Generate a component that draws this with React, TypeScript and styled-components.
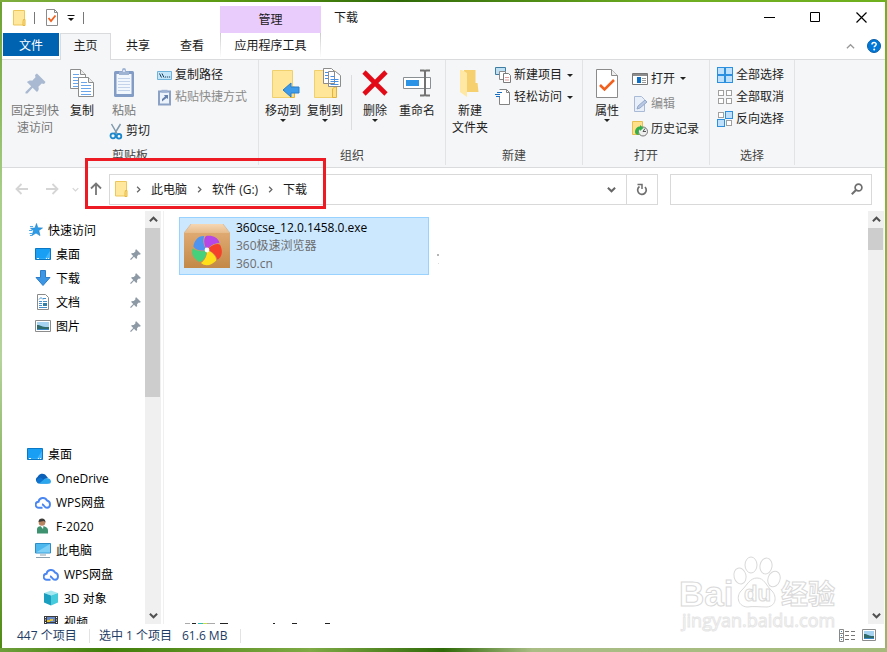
import React from "react";
import styled, { createGlobalStyle, css } from "styled-components";

const Global = createGlobalStyle`
  * { box-sizing: border-box; }
  body { margin: 0; }
  body, button, input {
    font-family: "Open Sans", "Noto Sans CJK SC", sans-serif;
    font-size: 12px;
    color: #1a1a1a;
  }
  button { background: none; border: 0; padding: 0; margin: 0; cursor: default; }
  svg { display: block; flex: none; }
`;

const Wallpaper = styled.div`
  height: 100vh;
  padding: 2px 2px 4px;
  background:
    linear-gradient(90deg, #6f9f3c, #3f7d08 12%, #7faa45 35%, #2f6a08 50%, #a9bd85 60%, #a4bb7c) bottom / 100% 4px no-repeat,
    linear-gradient(90deg, #7fae3f, #5b9a12 25%, #2f6a08 45%, #6fae22 75%, #6fb01e) top / 100% 2px no-repeat,
    linear-gradient(180deg, #6ca02f, #a9cf8a 30%, #b5d39c 55%, #4f8a12) left / 50% 100% no-repeat,
    linear-gradient(180deg, #6fb01e, #8db84a 50%, #9ab56c) right / 50% 100% no-repeat;
`;
const Window = styled.div`
  position: relative;
  display: flex;
  flex-direction: column;
  height: 100%;
  background: #fff;
  overflow: hidden;
`;

/* title bar */
const TitleBar = styled.header`
  display: flex;
  height: 31px;
  padding-right: 1px;
`;
const QuickTools = styled.div`
  display: flex;
  align-items: center;
  gap: 8px;
  width: 218px;
  padding-left: 10px;
`;
const Tick = styled.span`
  width: 1px;
  height: 12px;
  margin-right: 2px;
  background: #777;
`;
const ContextTitle = styled.div`
  width: 101px;
  margin-top: 4px;
  background: #e9cbfc;
  text-align: center;
  line-height: 27px;
`;
const WindowTitle = styled.h1`
  flex: 1;
  margin: 0;
  padding-left: 13px;
  font-size: 12px;
  font-weight: 400;
  line-height: 31px;
`;
const CaptionButton = styled.button`
  display: grid;
  place-items: center;
  width: 46px;
  height: 30px;
`;

/* ribbon tabs */
const TabRow = styled.nav`
  display: flex;
  height: 27px;
  padding: 0 4px 0 1px;
  border-bottom: 1px solid #dadbdc;
`;
const FileTab = styled.button`
  width: 56px;
  height: 23px;
  margin-right: 1px;
  background: #0063b1;
  color: #fff;
`;
const Tab = styled.button<{ $on?: boolean }>`
  width: ${(p) => (p.$on ? 51 : 54)}px;
  height: ${(p) => (p.$on ? 27 : 24)}px;
  ${(p) =>
    p.$on &&
    css`
      padding-bottom: 4px;
      border: 1px solid #dadbdc;
      border-bottom: 0;
      background: #f5f6f7;
    `}
`;
const ContextTab = styled.button`
  width: 101px;
  height: 24px;
  margin-left: 1px;
  border: solid;
  border-width: 0 1px;
  border-image: linear-gradient(#c9c9c9, #fff) 1;
`;
const TabEnd = styled.div`
  display: flex;
  align-items: center;
  gap: 12px;
  margin-left: auto;
`;

/* ribbon */
const Ribbon = styled.section`
  display: flex;
  height: 108px;
  background: #f5f6f7;
  border-bottom: 1px solid #dadbdc;
`;
const Group = styled.section<{ $w: number }>`
  display: flex;
  flex-direction: column;
  justify-content: space-between;
  width: ${(p) => p.$w}px;
  height: 105px;
  border-right: 1px solid #e2e3e4;
`;
const GroupBody = styled.div<{ $pad?: number }>`
  display: flex;
  align-items: flex-start;
  padding-left: ${(p) => p.$pad ?? 3}px;
`;
const GroupName = styled.h2`
  margin: 0;
  font-size: 12px;
  font-weight: 400;
  line-height: 18px;
  text-align: center;
  color: #444;
`;
const BigButton = styled.button<{ $w?: number; $dim?: boolean }>`
  display: flex;
  flex-direction: column;
  align-items: center;
  width: ${(p) => p.$w ?? 42}px;
  padding-top: 7px;
  line-height: 17px;
  white-space: nowrap;
  color: ${(p) => (p.$dim ? "#777" : "#222")};
`;
const BigIcon = styled.span`
  display: grid;
  place-items: center;
  height: 32px;
  margin-bottom: 3px;
`;
const Stack = styled.div<{ $row?: number; $ml?: number }>`
  display: flex;
  flex-direction: column;
  align-items: flex-start;
  margin-left: ${(p) => p.$ml ?? 4}px;
  padding-top: ${(p) => (p.$row ? 6 : 4)}px;
  > button { height: ${(p) => p.$row ?? 22}px; }
`;
const Clip = styled.div`
  display: flex;
  flex-direction: column;
  align-items: flex-start;
  gap: 3px;
  margin-left: 7px;
`;
const SmallButton = styled.button<{ $dim?: boolean }>`
  display: flex;
  align-items: center;
  gap: 3px;
  line-height: 18px;
  white-space: nowrap;
  color: ${(p) => (p.$dim ? "#8a8a8a" : "#222")};
`;
const InnerLine = styled.span`
  width: 1px;
  height: 55px;
  margin: 15px 2px 0 5px;
  background: #dcdddf;
`;
const Caret = styled.span<{ $side?: boolean }>`
  width: 6px;
  margin-left: ${(p) => (p.$side ? 2 : 0)}px;
  border: 3px solid transparent;
  border-top-color: #222;
  border-bottom: 0;
`;

/* address row */
const AddressRow = styled.div`
  position: relative;
  display: flex;
  align-items: center;
  height: 42px;
  padding: 0 13px 0 5px;
`;
const NavButtons = styled.div`
  display: flex;
  align-items: center;
  flex: none;
`;
const NavButton = styled.button<{ $w: number }>`
  display: grid;
  place-items: center;
  width: ${(p) => p.$w}px;
  height: 24px;
`;
const PathBox = styled.div`
  display: flex;
  align-items: center;
  flex: 1;
  height: 31px;
  padding-left: 4px;
  border: 1px solid #d9d9d9;
`;
const Crumb = styled.button`
  padding: 0 9px;
  white-space: nowrap;
`;
const PathIcon = styled.span`
  margin-right: 7px;
`;
const DropButton = styled.button`
  display: grid;
  place-items: center;
  width: 30px;
  height: 29px;
  margin-left: auto;
`;
const RefreshButton = styled(DropButton)`
  width: 31px;
  margin-left: 0;
  border-left: 1px solid #d9d9d9;
`;
const SearchBox = styled.label`
  display: flex;
  align-items: center;
  flex: 0 1 202px;
  height: 31px;
  margin-left: 12px;
  padding-right: 8px;
  border: 1px solid #d9d9d9;
`;
const SearchInput = styled.input`
  flex: 1;
  min-width: 0;
  height: 27px;
  padding: 0 6px;
  border: 0;
  outline: 0;
`;
const RedFrame = styled.div`
  position: absolute;
  top: -10px;
  left: 83px;
  width: 241px;
  height: 51px;
  border: 3px solid #ed1c24;
  pointer-events: none;
`;

/* panes */
const Panes = styled.div`
  display: flex;
  flex: 1;
  min-height: 0;
  padding: 1px 1px 0 0;
  overflow: hidden;
`;
const Sidebar = styled.aside`
  display: flex;
  width: 162px;
  padding-right: 2px;
  border-right: 1px solid #f0f0f0;
`;
const Tree = styled.ul`
  flex: 1;
  margin: 0;
  padding: 7px 0 0;
  overflow: hidden;
  list-style: none;
`;
const TreeItem = styled.li<{ $level: number; $gap?: boolean }>`
  display: flex;
  align-items: center;
  height: 24px;
  margin-top: ${(p) => (p.$gap ? 104 : 0)}px;
  padding: 0 4px 0 ${(p) => 25 + p.$level * 8}px;
  svg:last-child { margin-left: auto; }
`;
const TreeLink = styled.a`
  display: flex;
  align-items: center;
  gap: 5px;
  color: #000;
  text-decoration: none;
  white-space: nowrap;
`;
const Scroll = styled.div`
  display: flex;
  flex-direction: column;
  align-items: center;
  width: 16px;
  background: #f0f0f0;
`;
const ScrollButton = styled.button`
  display: grid;
  place-items: center;
  width: 16px;
  height: 17px;
`;
const Thumb = styled.div<{ $h: number }>`
  align-self: stretch;
  height: ${(p) => p.$h}px;
  margin: 0 1px 0 0;
  background: #cdcdcd;
`;
const Rest = styled.div`
  flex: 1;
`;
const Files = styled.main`
  display: flex;
  flex-direction: column;
  flex: 1;
  padding: 6px 0 0 15px;
`;
const FileRow = styled.div`
  display: flex;
  align-items: center;
`;
const FileTile = styled.button`
  display: flex;
  align-items: center;
  gap: 6px;
  width: 250px;
  height: 58px;
  padding-left: 4px;
  border: 1px solid #99d1ff;
  background: #cce8ff;
  text-align: left;
`;
const FileText = styled.span`
  display: flex;
  flex-direction: column;
  line-height: 18px;
  color: #6d6d6d;
`;
const FileName = styled.span`
  color: #000;
`;
const Speck = styled.svg`
  margin: 28px 0 0 8px;
`;
const NextRow = styled.svg`
  margin: auto 0 0 6px;
`;

/* status bar */
const Status = styled.footer`
  display: flex;
  align-items: center;
  height: 24px;
  padding: 0 9px 0 15px;
  color: #1e3c64;
  line-height: 18px;
`;
const StatusText = styled.span<{ $w: number }>`
  width: ${(p) => p.$w}px;
  white-space: nowrap;
`;
const StatusLine = styled.span`
  width: 1px;
  height: 14px;
  margin-right: 9px;
  background: #e3e3e3;
`;
const Views = styled.div`
  display: flex;
  align-items: center;
  gap: 6px;
  margin-left: auto;
  padding-bottom: 2px;
`;

/* watermark */
const Mark = styled.div`
  position: absolute;
  right: 46px;
  bottom: 14px;
  width: 160px;
  pointer-events: none;
`;
const MarkSvg = styled.svg`
  overflow: visible;
  font-family: "Liberation Sans", "Noto Sans CJK SC", sans-serif;
  font-weight: 700;
`;
const MarkUrl = styled.text`
  font-family: "Open Sans", sans-serif;
  font-weight: 400;
  font-size: 18px;
`;

/* icons */
const FolderSmall = () => (
  <svg width="14" height="16" viewBox="0 0 14 16">
    <path d="M1.500.5h11v14.500h-11z" fill="#ffe79c" stroke="#eec75a" />
    <path d="M11.500 9.500h1.500v6h-2v-4z" fill="#ffe08a" stroke="#e7b93c" />
  </svg>
);
const CheckPage = ({ big }: { big?: boolean }) => (
  <svg width={big ? 22 : 14} height={big ? 29 : 17} viewBox={big ? "0 0 22 29" : "0 0 14 17"}>
    {big ? (
      <>
        <path d="M.5.5h15l6 6v22H.5z" fill="#fff" stroke="#8b8b8b" />
        <path d="M15.500.5v6h6" fill="#eee" stroke="#8b8b8b" />
        <path d="M4 16l4.500 4.500L18 11" fill="none" stroke="#f2601d" strokeWidth="2.600" />
      </>
    ) : (
      <>
        <path d="M1.500 .5h8l3 3v13h-11z" fill="#fff" stroke="#8b8b8b" />
        <path d="M9.500 .5v3h3" fill="none" stroke="#8b8b8b" />
        <path d="M3.500 9l2.500 3L10.500 6.500" fill="none" stroke="#f2601d" strokeWidth="1.800" />
      </>
    )}
  </svg>
);
const QuickMenu = () => (
  <svg width="8" height="8" viewBox="0 0 8 8">
    <path d="M.5 1.500h7" stroke="#111" />
    <path d="M1 4h6L4 7z" fill="#111" />
  </svg>
);
const PinShape = ({ size, color }: { size: number; color: string }) => (
  <svg width={size} height={size} viewBox="0 0 22 22">
    <path d="M12.500.5L21.500 9.500 20 11.500l-2.500-.5L14 14.500c1 2.500 0 4.500-1.500 5.500L8 15.500l-5.500 6H.5V20l6-6L2 9.500C3.500 8 5.500 7.500 7.500 8L11 4.500 10.500 2z" fill={color} />
  </svg>
);
const PageLines = ({ x, y }: { x: number; y: number }) => (
  <g transform={`translate(${x} ${y})`}>
    <path d="M.5.5h10l5 5v14H.5z" fill="#fff" stroke="#8d8d8d" />
    <path d="M10.500.5v5h5" fill="#eee" stroke="#8d8d8d" />
    <path d="M3 5.500h6M3 8.500h10M3 11.500h10M3 14.500h10M3 17.500h10" stroke="#6aa5ea" />
  </g>
);
const CopyIcon = () => (
  <svg width="25" height="29" viewBox="0 0 25 29">
    <PageLines x={0} y={0} />
    <PageLines x={8} y={8} />
  </svg>
);
const PasteIcon = () => (
  <svg width="22" height="30" viewBox="0 0 22 30">
    <rect x="1" y="3" width="20" height="26" rx="1.500" fill="#829cc6" />
    <path d="M3.500 6h15v20h-15z" fill="#f2f6fd" />
    <path d="M5 10.500h12M5 13.500h12M5 16.500h12M5 19.500h12M5 22.500h12" stroke="#c5d3ea" />
    <path d="M6 7V3.500h3V2a2 2 0 0 1 4 0v1.500h3V7z" fill="#9fb3d3" />
    <circle cx="11" cy="3" r="1" fill="#eef" />
  </svg>
);
const CutIcon = () => (
  <svg width="14" height="17" viewBox="0 0 14 17">
    <path d="M2.500 1l5.700 10M11.500 1L5.500 11" stroke="#7f99ad" strokeWidth="1.500" fill="none" />
    <circle cx="4" cy="12.800" r="2.500" fill="none" stroke="#1b87cc" strokeWidth="1.800" />
    <circle cx="10" cy="13.300" r="2.300" fill="none" stroke="#1b87cc" strokeWidth="1.800" />
  </svg>
);
const PathCopyIcon = () => (
  <svg width="15" height="9" viewBox="0 0 15 9">
    <path d="M.5.5h14v8H.5z" fill="#c3e6f9" stroke="#6fb2da" />
    <path d="M2.500 2.500l2 4M5 2.500l2 4M8 6h1.200M10 6h1.200M12 6h1.200" stroke="#1d3f5e" />
  </svg>
);
const ShortcutIcon = () => (
  <svg width="15" height="17" viewBox="0 0 15 17">
    <path d="M2 2.500h11v13H2z" fill="#edf3fb" stroke="#8ba2c6" strokeWidth="2" />
    <path d="M4.500.8h6v3h-6z" fill="#9fb3d3" />
    <path d="M5 12.500V10l3-2.500-1-1.500h4v4L9.500 9z" fill="#6681ab" />
  </svg>
);
const BigFolder = () => (
  <>
    <path d="M.5 2.500h20v27H.5z" fill="#ffe699" stroke="#f0cf6d" />
    <path d="M20.500 19h2v10.500h-4V21z" fill="#ffdf85" stroke="#e2b43e" />
  </>
);
const MoveIcon = () => (
  <svg width="34" height="31" viewBox="-6 0 34 31">
    <BigFolder />
    <path d="M11 22l8-7v4h8v6h-8v4z" fill="#3d9be9" stroke="#2a7fcb" />
  </svg>
);
const CopyToIcon = () => (
  <svg width="34" height="31" viewBox="-6 0 34 31">
    <BigFolder />
    <path d="M9.500.5h8l3 3v12h-11zM14.500 3.500h7l5 4v11h-12z" fill="#fff" stroke="#8d8d8d" />
    <path d="M11 4.500h3M11 7.500h3M11 10.500h3M16.500 8.500h4M16.500 11.500h8M16.500 13.500h8M16.500 16.500h8" stroke="#4a90e2" />
  </svg>
);
const DeleteIcon = () => (
  <svg width="26" height="26" viewBox="0 0 26 26">
    <path d="M2 2l22 22M24 2L2 24" stroke="#e30a17" strokeWidth="4.600" />
  </svg>
);
const RenameIcon = () => (
  <svg width="28" height="28" viewBox="0 0 28 28">
    <path d="M.5 8.500h27v11H.5z" fill="#fff" stroke="#8a8f94" />
    <path d="M3 11h13v6H3z" fill="#2b93e6" />
    <path d="M22 2v24M17 1.500h4l1 1 1-1h4M17 26.500h4l1-1 1 1h4" fill="none" stroke="#737373" strokeWidth="2" />
  </svg>
);
const NewFolderIcon = () => (
  <svg width="20" height="28" viewBox="0 0 20 28">
    <path d="M4 1h11.500v13h2l1 9H4z" fill="#f6cf6f" />
    <path d="M0 1h2l5 3v24L0 23z" fill="#ffe8a3" />
  </svg>
);
const NewItemIcon = () => (
  <svg width="16" height="16" viewBox="0 0 16 16">
    <path d="M.5.5h10v7H.5z" fill="#bfe0f2" stroke="#3f7da3" />
    <path d="M4.500 4.500h6v8h-6z" fill="#fff" stroke="#8a8a8a" />
    <path d="M8.500 6.500h5l2 2v7h-7z" fill="#fff" stroke="#7b7b7b" />
    <path d="M10 10.500h4M10 13h4" stroke="#e49b9b" />
  </svg>
);
const EasyIcon = () => (
  <svg width="16" height="16" viewBox="0 0 16 16">
    <path d="M4.500 7v8.500h10v-12l-3-3h-7" fill="#fff" stroke="#838383" />
    <path d="M11.500.5v3h3" fill="none" stroke="#838383" />
    <path d="M2 3.500h5M0 5.500h5M1 7.500h4" stroke="#1b6fc0" strokeWidth="1.200" />
  </svg>
);
const OpenIcon = () => (
  <svg width="16" height="12" viewBox="0 0 16 12">
    <path d="M.5.5h15v11H.5z" fill="#fff" stroke="#777" />
    <path d="M1 2h14" stroke="#8d8d8d" strokeWidth="2" />
    <path d="M5 4h4v6H5z" fill="#0d6fc8" />
    <path d="M10 5.500h4M10 7.500h4M10 9.500h4" stroke="#999" />
  </svg>
);
const EditIcon = () => (
  <svg width="16" height="16" viewBox="0 0 16 16">
    <path d="M2.500.5h7l3 3v12h-10z" fill="#e9eff9" stroke="#a9bad6" />
    <path d="M5 13l1-3 7-6 2 2-7 6z" fill="#b8c8e2" stroke="#93a9cc" />
  </svg>
);
const HistoryIcon = () => (
  <svg width="16" height="16" viewBox="0 0 16 16">
    <path d="M.5.5h10v13H.5z" fill="#ffe08a" stroke="#e7bf50" />
    <circle cx="11" cy="10.500" r="4.500" fill="#eee" stroke="#777" />
    <path d="M11 10.500l2-3M11 10.500h3" stroke="#555" />
    <path d="M3 11C3 7.500 5.500 5.500 8 5.500V4l3.500 3L8 10V8.500c-1.500 0-2 1.500-1 5.500-2.500 0-4-1-4-3z" fill="#33b04a" />
  </svg>
);
const Cells = ({ blue }: { blue: number[] }) => (
  <svg width="16" height="16" viewBox="0 0 16 16">
    {[0, 1, 2, 3].map((i) => {
      const on = blue.includes(i);
      const s = on ? 7 : 5;
      const o = on ? 0 : 1;
      return (
        <rect key={i} x={(i % 2) * 8 + 0.5 + o} y={Math.floor(i / 2) * 8 + 0.5 + o} width={s} height={s} fill={on ? "#bfe1fb" : "#fff"} stroke={on ? "#2b90e0" : "#a0a0a0"} />
      );
    })}
  </svg>
);
const Arrow = ({ turn, color }: { turn: number; color: string }) => (
  <svg width="14" height="14" viewBox="0 0 14 14">
    <path d="M13 7H2M6.500 2L1.500 7l5 5" fill="none" stroke={color} strokeWidth="1.800" transform={`rotate(${turn} 7 7)`} />
  </svg>
);
const Chevron = ({ turn = 0, color = "#666", size = 9, weight = 1.8 }: { turn?: number; color?: string; size?: number; weight?: number }) => (
  <svg width={size} height={size} viewBox="0 0 10 10">
    <path d="M1 3l4 4 4-4" fill="none" stroke={color} strokeWidth={weight} transform={`rotate(${turn} 5 5)`} />
  </svg>
);
const StarIcon = () => (
  <svg width="16" height="16" viewBox="0 0 16 16">
    <path d="M9.500 1.500l1.300 4.300 4.700.2-3.700 2.600 1.200 5L9 11l-4 2.500 1.500-4.700-3-2.500 4.500-.3z" fill="#2d9be8" stroke="#1a7fcb" strokeWidth=".6" />
    <path d="M3 4.500h3M2 8.500h3M2.500 11.500h3M3 13.500h2" stroke="#4aaaf0" />
  </svg>
);
const DesktopIcon = () => (
  <svg width="16" height="12" viewBox="0 0 16 12">
    <path d="M.5.5h15v11H.5z" fill="#19a0f5" stroke="#0b78c6" />
    <path d="M1 10.500h9L15 3v8H1z" fill="#40b5ff" />
    <path d="M2 10.500h2M11 10.500h1M13 10.500h1" stroke="#fff" />
  </svg>
);
const DownloadIcon = () => (
  <svg width="16" height="16" viewBox="0 0 16 16">
    <path d="M5.500.5h5v7h4.500L8 15.500 1 7.500h4.500z" fill="#3d96e4" stroke="#2b7dc9" />
  </svg>
);
const DocIcon = () => (
  <svg width="16" height="16" viewBox="0 0 16 16">
    <path d="M2.500.5h8l3 3v12h-11z" fill="#fff" stroke="#8a8a8a" />
    <path d="M4 5.500l2-2 2 2M8 4.500h3M4 7.500h3M8 7.500h4M4 9.500h3M4 11.500h3M4 13.500h8" fill="none" stroke="#4390cc" />
    <path d="M8 9h4v3H8z" fill="#2f7fa8" />
  </svg>
);
const PictureIcon = ({ w = 16 }: { w?: number }) => (
  <svg width={w} height="12" viewBox={`0 0 ${w} 12`}>
    <path d={`M.5.5h${w - 1}v11H.5z`} fill="#fff" stroke="#8c8c8c" />
    <path d={`M2 2h${w - 4}v8H2z`} fill="#a7d3f3" />
    <path d={`M2 5c4 0 5 2.500 ${w - 4} 2v2H2z`} fill="#2f6b6a" />
    <path d={`M2 9h${w - 4}v1H2z`} fill="#3b86c4" />
  </svg>
);
const OneDriveIcon = () => (
  <svg width="16" height="11" viewBox="0 0 16 11">
    <path d="M3 9.500A3 3 0 0 1 2.500 4 5 5 0 0 1 11 2.500L13 5z" fill="#0c60b8" />
    <path d="M3 10.500a3 3 0 0 1 0-5l3-1 7 6z" fill="#0f74cf" />
    <path d="M4 10.700L10 5.500c4-1.200 6 1 6 3a2.300 2.300 0 0 1-2.500 2.200z" fill="#2ba5ec" />
  </svg>
);
const WpsIcon = () => (
  <svg width="16" height="13" viewBox="0 0 16 13">
    <path d="M7.500 11.800H3.800A3 3 0 0 1 3.500 5.800 4.500 4.500 0 0 1 12 4.500c4 1 4 7 0 7.300-3 0-2.500-3-5-3.500" fill="none" stroke="#4a86f2" strokeWidth="1.900" />
  </svg>
);
const UserIcon = () => (
  <svg width="16" height="16" viewBox="0 0 16 16">
    <circle cx="7" cy="4.500" r="3.300" fill="#b98561" />
    <path d="M3.500 4C3.500 1.500 5 .5 7 .5S10.500 2 10.500 4.500L9 3z" fill="#3b3a38" />
    <path d="M2 15.500V11c0-2 2-3 5-3s6 1.500 6 4.500v3z" fill="#3f9270" />
    <path d="M5.500 8h3L8 11z" fill="#fff" />
  </svg>
);
const PcIcon = () => (
  <svg width="16" height="15" viewBox="0 0 16 15">
    <path d="M.5.5h15v9.500H.5z" fill="#4db8ee" stroke="#2d8ec7" />
    <path d="M1 9.500L15 1v8.500z" fill="#7fd0f7" />
    <path d="M5 12h6M1 14.500h14" stroke="#8aa0ad" />
  </svg>
);
const CubeIcon = () => (
  <svg width="16" height="16" viewBox="0 0 16 16">
    <path d="M1 3l7-2.500L15 3 8 5.500z" fill="#a5e8f2" />
    <path d="M1 3l7 2.500V15.500L1 12.500z" fill="#1a9fc0" />
    <path d="M15 3L8 5.500v10l7-3z" fill="#45cbdc" />
  </svg>
);
const VideoIcon = () => (
  <svg width="16" height="14" viewBox="0 0 16 14">
    <path d="M1 1h14v13H1z" fill="#3c3c3c" />
    <path d="M4 2h8v5H4zM4 8h8v5H4z" fill="#6688c7" />
    <path d="M4 5h3v2H4zM7 4h3v2H7z" fill="#e6c22e" />
    <path d="M2.500 2v12M13.500 2v12" stroke="#fff" strokeDasharray="1 1.500" />
  </svg>
);
const BoxIcon = () => (
  <svg width="46" height="46" viewBox="0 0 46 46">
    <defs>
      <linearGradient id="lid" x2="0" y2="1"><stop stopColor="#f5d7b4" /><stop offset="1" stopColor="#e7bb8b" /></linearGradient>
      <linearGradient id="front" x2="0" y2="1"><stop stopColor="#dfa972" /><stop offset="1" stopColor="#c28948" /></linearGradient>
    </defs>
    <path d="M7 1h32l7 9H0z" fill="url(#lid)" />
    <path d="M0 10h46v35H0z" fill="url(#front)" />
    <path d="M7 1L0 10M39 1l7 9" stroke="#d3ab80" strokeWidth=".6" />
    {["#b547e8", "#f5402a", "#ffdf1a", "#45d07c", "#4f94ef"].map((c, i) => (
      <path key={c} d="M23 27C20 22 19 16 22 13c6-1 12 1 13.500 7-3 0-9 1-12.500 7z" fill={c} transform={`rotate(${i * 72} 23 27)`} />
    ))}
    <circle cx="23" cy="27" r="2.400" fill="#fff" />
  </svg>
);
const ListViewIcon = () => (
  <svg width="17" height="13" viewBox="0 0 17 13">
    <path d="M.5.5h4v12h-4zM.5 4.500h4M.5 8.500h4" fill="#fff" stroke="#888" />
    <path d="M2 2.500h1M2 6.500h1M2 10.500h1" stroke="#3d7ec9" />
    <path d="M6 2.500h4M12 2.500h4M6 6.500h4M12 6.500h4M6 10.500h4M12 10.500h4" stroke="#777" />
  </svg>
);

const tree: { icon: React.ReactNode; text: string; level: number; pin?: boolean; gap?: boolean }[] = [
  { icon: <StarIcon />, text: "快速访问", level: 0 },
  { icon: <DesktopIcon />, text: "桌面", level: 1, pin: true },
  { icon: <DownloadIcon />, text: "下载", level: 1, pin: true },
  { icon: <DocIcon />, text: "文档", level: 1, pin: true },
  { icon: <PictureIcon />, text: "图片", level: 1, pin: true },
  { icon: <DesktopIcon />, text: "桌面", level: 0, gap: true },
  { icon: <OneDriveIcon />, text: "OneDrive", level: 1 },
  { icon: <WpsIcon />, text: "WPS网盘", level: 1 },
  { icon: <UserIcon />, text: "F-2020", level: 1 },
  { icon: <PcIcon />, text: "此电脑", level: 1 },
  { icon: <WpsIcon />, text: "WPS网盘", level: 2 },
  { icon: <CubeIcon />, text: "3D 对象", level: 2 },
  { icon: <VideoIcon />, text: "视频", level: 2 },
];

const ScrollBar = ({ thumb }: { thumb: number }) => (
  <Scroll>
    <ScrollButton aria-label="向上滚动"><Chevron turn={180} color="#505050" weight={2.2} /></ScrollButton>
    <Thumb $h={thumb} />
    <Rest />
    <ScrollButton aria-label="向下滚动"><Chevron color="#505050" weight={2.2} /></ScrollButton>
  </Scroll>
);

export default function App() {
  return (
    <Wallpaper>
      <Global />
      <Window>
        <TitleBar>
          <QuickTools>
            <FolderSmall />
            <Tick />
            <CheckPage />
            <QuickMenu />
            <Tick />
          </QuickTools>
          <ContextTitle>管理</ContextTitle>
          <WindowTitle>下载</WindowTitle>
          <CaptionButton aria-label="最小化">
            <svg width="11" height="11" viewBox="0 0 11 11"><path d="M0 5.500h11" stroke="#000" /></svg>
          </CaptionButton>
          <CaptionButton aria-label="最大化">
            <svg width="10" height="10" viewBox="0 0 10 10"><path d="M.5.5h9v9h-9z" fill="none" stroke="#000" /></svg>
          </CaptionButton>
          <CaptionButton aria-label="关闭">
            <svg width="11" height="11" viewBox="0 0 11 11"><path d="M.5.5l10 10M10.500.5l-10 10" stroke="#000" strokeWidth="1.200" /></svg>
          </CaptionButton>
        </TitleBar>

        <TabRow>
          <FileTab>文件</FileTab>
          <Tab $on>主页</Tab>
          <Tab>共享</Tab>
          <Tab>查看</Tab>
          <ContextTab>应用程序工具</ContextTab>
          <TabEnd>
            <Chevron turn={180} color="#999" weight={1.4} />
            <svg width="14" height="14" viewBox="0 0 14 14">
              <circle cx="7" cy="7" r="6.500" fill="#0078d7" stroke="#0a5ea8" />
              <path d="M5 5.500C5 3 9.200 3 9.200 5.300 9.200 6.800 7.200 6.800 7.200 8.300" fill="none" stroke="#fff" strokeWidth="1.500" />
              <circle cx="7.200" cy="10.500" r="1" fill="#fff" />
            </svg>
          </TabEnd>
        </TabRow>

        <Ribbon>
          <Group $w={257}>
            <GroupBody $pad={6}>
              <BigButton $w={54} $dim>
                <BigIcon><PinShape size={21} color="#a9b9d1" /></BigIcon>
                <span>固定到快<br />速访问</span>
              </BigButton>
              <BigButton $w={40}>
                <BigIcon><CopyIcon /></BigIcon>
                复制
              </BigButton>
              <Clip>
                <BigButton $w={30} $dim>
                  <BigIcon><PasteIcon /></BigIcon>
                  粘贴
                </BigButton>
                <SmallButton><CutIcon />剪切</SmallButton>
              </Clip>
              <Stack $ml={7}>
                <SmallButton><PathCopyIcon />复制路径</SmallButton>
                <SmallButton $dim><ShortcutIcon />粘贴快捷方式</SmallButton>
              </Stack>
            </GroupBody>
            <GroupName>剪贴板</GroupName>
          </Group>

          <Group $w={187}>
            <GroupBody>
              <BigButton><BigIcon><MoveIcon /></BigIcon>移动到<Caret /></BigButton>
              <BigButton><BigIcon><CopyToIcon /></BigIcon>复制到<Caret /></BigButton>
              <InnerLine />
              <BigButton><BigIcon><DeleteIcon /></BigIcon>删除<Caret /></BigButton>
              <BigButton><BigIcon><RenameIcon /></BigIcon>重命名</BigButton>
            </GroupBody>
            <GroupName>组织</GroupName>
          </Group>

          <Group $w={137}>
            <GroupBody>
              <BigButton>
                <BigIcon><NewFolderIcon /></BigIcon>
                <span>新建<br />文件夹</span>
              </BigButton>
              <Stack>
                <SmallButton><NewItemIcon />新建项目<Caret $side /></SmallButton>
                <SmallButton><EasyIcon />轻松访问<Caret $side /></SmallButton>
              </Stack>
            </GroupBody>
            <GroupName>新建</GroupName>
          </Group>

          <Group $w={127}>
            <GroupBody>
              <BigButton><BigIcon><CheckPage big /></BigIcon>属性<Caret /></BigButton>
              <Stack $row={25}>
                <SmallButton><OpenIcon />打开<Caret $side /></SmallButton>
                <SmallButton $dim><EditIcon />编辑</SmallButton>
                <SmallButton><HistoryIcon />历史记录</SmallButton>
              </Stack>
            </GroupBody>
            <GroupName>打开</GroupName>
          </Group>

          <Group $w={85}>
            <GroupBody>
              <Stack>
                <SmallButton><Cells blue={[0, 1, 2, 3]} />全部选择</SmallButton>
                <SmallButton><Cells blue={[]} />全部取消</SmallButton>
                <SmallButton><Cells blue={[1, 2]} />反向选择</SmallButton>
              </Stack>
            </GroupBody>
            <GroupName>选择</GroupName>
          </Group>
        </Ribbon>

        <AddressRow>
          <NavButtons>
            <NavButton $w={30} aria-label="后退"><Arrow turn={0} color="#d5d5d5" /></NavButton>
            <NavButton $w={30} aria-label="前进"><Arrow turn={180} color="#d5d5d5" /></NavButton>
            <NavButton $w={16} aria-label="最近浏览的位置"><Chevron color="#d5d5d5" size={7} /></NavButton>
            <NavButton $w={26} aria-label="上移"><Arrow turn={90} color="#777" /></NavButton>
          </NavButtons>
          <PathBox>
            <PathIcon><FolderSmall /></PathIcon>
            <Chevron turn={-90} size={7} />
            <Crumb>此电脑</Crumb>
            <Chevron turn={-90} size={7} />
            <Crumb>软件 (G:)</Crumb>
            <Chevron turn={-90} size={7} />
            <Crumb>下载</Crumb>
            <DropButton aria-label="展开地址"><Chevron weight={2.2} /></DropButton>
            <RefreshButton aria-label="刷新">
              <svg width="12" height="13" viewBox="0 0 12 13">
                <path d="M3.500 3.500A4.300 4.300 0 1 0 9 4" fill="none" stroke="#6f6f6f" strokeWidth="1.700" />
                <path d="M1.500 1.500H6V6" fill="none" stroke="#6f6f6f" strokeWidth="1.500" />
              </svg>
            </RefreshButton>
          </PathBox>
          <SearchBox>
            <SearchInput type="text" aria-label="搜索" />
            <svg width="12" height="12" viewBox="0 0 12 12">
              <circle cx="7.500" cy="4.500" r="3.400" fill="none" stroke="#6f6f6f" strokeWidth="1.700" />
              <path d="M5 7L.8 11.200" stroke="#6f6f6f" strokeWidth="2" />
            </svg>
          </SearchBox>
          <RedFrame />
        </AddressRow>

        <Panes>
          <Sidebar>
            <Tree>
              {tree.map((t, i) => (
                <TreeItem key={i} $level={t.level} $gap={t.gap}>
                  <TreeLink href="#">{t.icon}<span>{t.text}</span></TreeLink>
                  {t.pin && <PinShape size={11} color="#8d9aa5" />}
                </TreeItem>
              ))}
            </Tree>
            <ScrollBar thumb={169} />
          </Sidebar>
          <Files>
            <FileRow>
              <FileTile>
                <BoxIcon />
                <FileText>
                  <FileName>360cse_12.0.1458.0.exe</FileName>
                  <span>360极速浏览器</span>
                  <span>360.cn</span>
                </FileText>
              </FileTile>
              <Speck width="3" height="12" viewBox="0 0 3 12">
                <path d="M0 0h2v2H0z" fill="#b5b5b5" />
                <path d="M1 9h1v1H1z" fill="#ddd" />
              </Speck>
            </FileRow>
            <NextRow width="150" height="1" viewBox="0 0 150 1">
              <path d="M0 0h5v1H0zM22 0h8v1h-8z" fill="#aaa" />
              <path d="M7 0h4v1H7zM35 0h8v1h-8zM88 0h2v1h-2zM107 0h5v1h-5zM140 0h5v1h-5z" fill="#222" />
              <path d="M13 0h5v1h-5z" fill="#3bb" />
              <path d="M18 0h4v1h-4z" fill="#cd4" />
            </NextRow>
          </Files>
          <ScrollBar thumb={22} />
        </Panes>

        <Status>
          <StatusText $w={72}>447 个项目</StatusText>
          <StatusLine />
          <StatusText $w={83}>选中 1 个项目</StatusText>
          <StatusText $w={58}>61.6 MB</StatusText>
          <StatusLine />
          <Views>
            <button aria-label="详细信息"><ListViewIcon /></button>
            <button aria-label="大缩略图"><PictureIcon w={14} /></button>
          </Views>
        </Status>

        <Mark>
          <MarkSvg width="160" height="78" viewBox="0 0 160 78" fill="#fff" stroke="#d9d9d9">
            <ellipse cx="61" cy="20" rx="6" ry="8" transform="rotate(-15 61 20)" />
            <ellipse cx="72" cy="9" rx="6" ry="8" />
            <ellipse cx="87" cy="10" rx="6" ry="8" transform="rotate(10 87 10)" />
            <ellipse cx="95" cy="23" rx="6" ry="8" transform="rotate(20 95 23)" />
            <path d="M78 22c7 0 9 7 14 12 6 5 6 16-4 17-7 0-13-1-20 0-10-1-11-12-5-17 5-5 8-12 15-12z" />
            <text x="0" y="50" fontSize="35">Bai</text>
            <text x="65" y="45" fontSize="22">du</text>
            <text x="102" y="48" fontSize="27">经验</text>
            <MarkUrl x="3" y="71" stroke="#e6e6e6">jingyan.baidu.com</MarkUrl>
          </MarkSvg>
        </Mark>
      </Window>
    </Wallpaper>
  );
}
